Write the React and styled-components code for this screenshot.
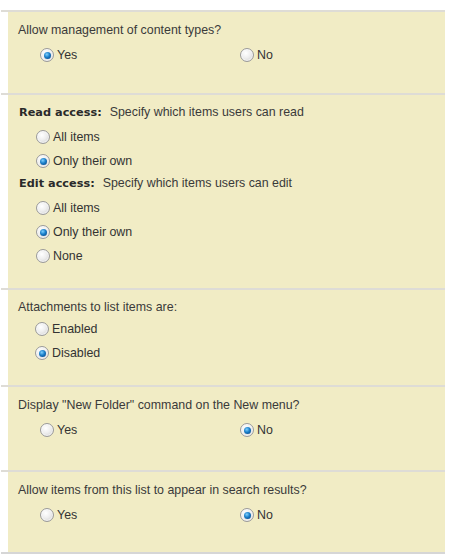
import React from "react";
import styled, { createGlobalStyle } from "styled-components";

const Global = createGlobalStyle`
  html, body { margin: 0; padding: 0; background: #fff; }
  body { font-family: "Liberation Sans", Arial, sans-serif; }
`;

const Page = styled.div`
  width: 444px;
  padding: 10px 0 0 1px;
`;

const Section = styled.section`
  border-top: 2px solid #dedcd6;
  &:last-child { border-bottom: 2px solid #d6d6d6; }
`;

const Panel = styled.div`
  margin-left: 7px;
  background: #f1ecc5;
  height: ${(p) => p.$h}px;
  box-sizing: border-box;
  padding: ${(p) => p.$pt}px 0 0 ${(p) => p.$pl}px;
`;

const Heading = styled.div`
  font-size: 12.4px;
  line-height: 16px;
  color: #3a3a3a;
  white-space: nowrap;
  margin: ${(p) => p.$mt || 0}px 0 ${(p) => p.$mb || 0}px;
`;

const Strong = styled.b`
  font-family: "DejaVu Sans", Verdana, sans-serif;
  font-size: 11.3px;
  font-weight: bold;
  color: #2a2a2a;
  margin-right: 8px;
`;

const Options = styled.div`
  display: grid;
  grid-template-columns: ${(p) => (p.$inline ? "200px 1fr" : "1fr")};
  padding-left: ${(p) => p.$indent}px;
  margin-top: ${(p) => p.$mt || 0}px;
`;

const Option = styled.label`
  display: flex;
  align-items: center;
  gap: 3px;
  height: ${(p) => p.$h || 24}px;
  font-size: 12.4px;
  color: #333;
`;

const Radio = styled.span`
  position: relative;
  width: 12px;
  height: 12px;
  border-radius: 50%;
  border: 1px solid #9a9a9a;
  background: radial-gradient(circle at 40% 35%, #ffffff 0%, #eeeeee 45%, #c9c9c9 100%);
  box-shadow: inset 0 0 0 1px rgba(255,255,255,0.6);
  flex: none;
  &::after {
    content: "";
    display: ${(p) => (p.$on ? "block" : "none")};
    position: absolute;
    left: 2.5px;
    top: 2.5px;
    width: 7px;
    height: 7px;
    border-radius: 50%;
    background: radial-gradient(circle at 40% 35%, #7fd0ff 0%, #1a7fc9 45%, #053a7a 100%);
  }
`;

const Opt = ({ on, children, h }) => (
  <Option $h={h}>
    <Radio $on={on} />
    <span>{children}</span>
  </Option>
);

export default function App() {
  return (
    <>
      <Global />
      <Page>
        <Section>
          <Panel $h={81} $pt={10} $pl={10}>
            <Heading>Allow management of content types?</Heading>
            <Options $inline $indent={22} $mt={5}>
              <Opt on>Yes</Opt>
              <Opt>No</Opt>
            </Options>
          </Panel>
        </Section>
        <Section>
          <Panel $h={193} $pt={9} $pl={11}>
            <Heading $mb={4}>
              <Strong>Read access:</Strong>Specify which items users can read
            </Heading>
            <Options $indent={17}>
              <Opt>All items</Opt>
              <Opt on>Only their own</Opt>
            </Options>
            <Heading $mt={2} $mb={4}>
              <Strong>Edit access:</Strong>Specify which items users can edit
            </Heading>
            <Options $indent={17}>
              <Opt>All items</Opt>
              <Opt on>Only their own</Opt>
              <Opt>None</Opt>
            </Options>
          </Panel>
        </Section>
        <Section>
          <Panel $h={95} $pt={9} $pl={10}>
            <Heading $mb={2}>Attachments to list items are:</Heading>
            <Options $indent={17}>
              <Opt>Enabled</Opt>
              <Opt on>Disabled</Opt>
            </Options>
          </Panel>
        </Section>
        <Section>
          <Panel $h={83} $pt={10} $pl={10}>
            <Heading>Display "New Folder" command on the New menu?</Heading>
            <Options $inline $indent={22} $mt={5}>
              <Opt>Yes</Opt>
              <Opt on>No</Opt>
            </Options>
          </Panel>
        </Section>
        <Section>
          <Panel $h={80} $pt={10} $pl={10}>
            <Heading>Allow items from this list to appear in search results?</Heading>
            <Options $inline $indent={22} $mt={5}>
              <Opt>Yes</Opt>
              <Opt on>No</Opt>
            </Options>
          </Panel>
        </Section>
      </Page>
    </>
  );
}
